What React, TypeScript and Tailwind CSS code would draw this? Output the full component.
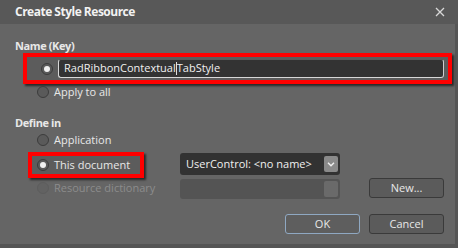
import React from 'react';

const font = { fontFamily: '"Open Sans", "Noto Sans", sans-serif' };

function Radio({ checked = false, disabled = false }: { checked?: boolean; disabled?: boolean }) {
    return (
        <span className={`flex h-[12px] w-[12px] shrink-0 items-center justify-center rounded-full border ${disabled ? 'border-[#5d5d5d] bg-[#626262]' : 'border-[#3c3c3c] bg-[#5a5a5a]'}`}>
            {checked && <span className="h-[6px] w-[6px] rounded-full bg-[#f0f0f0]" />}
        </span>
    );
}

function Button({ children, focused = false }: { children: React.ReactNode; focused?: boolean }) {
    return (
        <button className={`flex h-[20px] w-[75px] items-center justify-center rounded-[3px] border text-[11px] text-[#e8e8e8] ${focused ? 'border-[#8fa8c2] bg-[#5e5e5e]' : 'border-[#3a3a3a] bg-[#5b5b5b]'}`}>
            {children}
        </button>
    );
}

export default function App() {
    return (
        <div className="flex h-[248px] w-[458px] flex-col bg-[#656565] text-[11px] text-[#e8e8e8]" style={font}>
            <div className="flex h-[24px] shrink-0 items-center justify-between bg-[#585858] pl-[15px] pr-[10px]">
                <span className="text-[12px] font-bold tracking-[-0.5px] text-[#f2f2f2]">Create Style Resource</span>
                <svg width="10" height="10" viewBox="0 0 10 10" className="mr-[3px]">
                    <path d="M1 1 L9 9 M9 1 L1 9" stroke="#d8d8d8" strokeWidth="1.3" />
                </svg>
            </div>
            <div className="flex flex-1 flex-col border-r-[3px] border-b-[4px] border-[#555555] pl-[15px]">
                <div className="mt-[14px] h-[15px] font-bold leading-[15px] tracking-[-0.4px]">Name (Key)</div>
                <div className="ml-[8px] flex h-[31px] w-[429px] items-center border-[4px] border-[#ff0000] bg-[#5c5c5c] pl-[14px] pr-[4px] shadow-[2px_2px_2px_rgba(0,0,0,0.6)]">
                    <Radio checked />
                    <div className="ml-[5px] flex h-[19px] flex-1 items-center rounded-[3px] border border-t-[#5a5a5a] border-r-[#cfcfcf] border-b-[#d8d8d8] border-l-[#d8d8d8] bg-[#333333] pl-[5px] text-[#f0f0f0]">
                        RadRibbonContextual<span className="inline-block h-[13px] w-px bg-[#e0e0e0]" />TabStyle
                    </div>
                </div>
                <div className="ml-[22px] flex h-[16px] items-center gap-[5px]">
                    <Radio />
                    <span>Apply to all</span>
                </div>
                <div className="mt-[15px] h-[16px] font-bold leading-[16px] tracking-[-0.4px]">Define in</div>
                <div className="ml-[22px] mt-[1px] flex h-[16px] items-center gap-[5px]">
                    <Radio />
                    <span>Application</span>
                </div>
                <div className="mt-[4px] flex items-start">
                    <div className="flex w-[165px] flex-col">
                        <div className="ml-[13px] flex h-[26px] w-[116px] items-center gap-[5px] border-[4px] border-[#ff0000] bg-[#5c5c5c] pl-[5px] shadow-[2px_2px_2px_rgba(0,0,0,0.6)]">
                            <Radio checked />
                            <span>This document</span>
                        </div>
                        <div className="ml-[22px] mt-[2px] flex h-[16px] items-center gap-[5px] text-[#8c8c8c]">
                            <Radio disabled />
                            <span>Resource dictionary</span>
                        </div>
                    </div>
                    <div className="mt-[1px] flex flex-col gap-[4px]">
                        <div className="flex h-[22px] w-[160px] items-center justify-between rounded-[3px] bg-[#323232] pl-[6px] pr-[2px] text-[#f0f0f0]">
                            <span>UserControl: &lt;no name&gt;</span>
                            <span className="flex h-[16px] w-[14px] items-center justify-center rounded-[2px] bg-[#8a8a8a]">
                                <svg width="8" height="5" viewBox="0 0 8 5">
                                    <path d="M1 0.8 L4 3.8 L7 0.8" stroke="#f0f0f0" strokeWidth="1.4" fill="none" />
                                </svg>
                            </span>
                        </div>
                        <div className="flex h-[20px] w-[160px] items-center justify-end rounded-[3px] bg-[#545454] pr-[2px]">
                            <span className="h-[16px] w-[14px] rounded-[2px] bg-[#6a6a6a]" />
                        </div>
                    </div>
                    <div className="ml-[29px] mt-[26px]">
                        <Button>New...</Button>
                    </div>
                </div>
                <div className="mt-[15px] flex justify-end gap-[9px] pr-[11px]">
                    <Button focused>OK</Button>
                    <Button>Cancel</Button>
                </div>
            </div>
        </div>
    );
}
